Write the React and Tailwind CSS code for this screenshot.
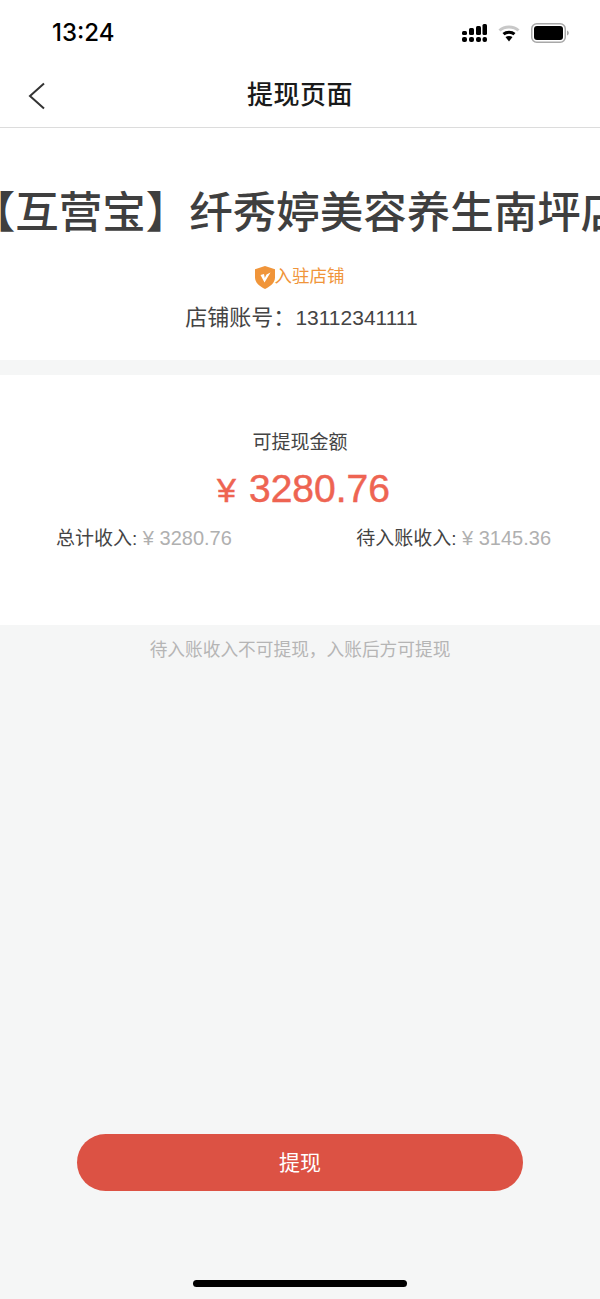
const font = { fontFamily: '"Liberation Sans", "Noto Sans CJK SC", sans-serif' };

function StatusIcons() {
  return (
    <div className="flex items-center gap-[11px]">
      <svg width="25" height="18" viewBox="0 0 25 18" fill="#000">
        <rect x="0" y="7" width="5" height="4" rx="1.5" />
        <rect x="7" y="4" width="5" height="7" rx="1.5" />
        <rect x="14" y="2" width="5" height="9" rx="1.5" />
        <rect x="20.5" y="0" width="4.5" height="11" rx="1.5" />
        <rect x="0" y="13" width="5" height="5" rx="2" />
        <rect x="7" y="13" width="5" height="5" rx="2" />
        <rect x="14" y="13" width="5" height="5" rx="2" />
        <rect x="20.5" y="13" width="4.5" height="5" rx="2" />
      </svg>
      <svg width="22" height="17" viewBox="0 0 22 17" fill="none">
        <path d="M1.5 5.5C6.5 0.8 15.5 0.8 20.5 5.5" stroke="#c8c8c8" strokeWidth="3" />
        <path d="M5.5 9.2C8.5 6.5 13.5 6.5 16.5 9.2" stroke="#000" strokeWidth="3" />
        <path d="M7.5 12L11 16.5L14.5 12C12.5 10.6 9.5 10.6 7.5 12Z" fill="#000" />
      </svg>
      <svg width="38" height="20" viewBox="0 0 38 20" fill="none">
        <rect x="0.75" y="0.75" width="33.5" height="18.5" rx="5" stroke="#a8a8a8" strokeWidth="1.5" />
        <rect x="3" y="3" width="29" height="14" rx="3" fill="#000" />
        <path d="M36 7.5C37.2 8 37.8 9 37.8 10S37.2 12 36 12.5Z" fill="#a8a8a8" />
      </svg>
    </div>
  );
}

function Shield() {
  return (
    <svg width="20" height="23" viewBox="0 0 20 23">
      <path d="M10 0L20 3.2V11.5C20 16.5 15.5 20.5 10 23C4.5 20.5 0 16.5 0 11.5V3.2Z" fill="#f0953a" />
      <path d="M5.5 9L9.5 16.5L15.5 6.5L11.5 8.5L9.8 12L9 8Z" fill="#fff" />
    </svg>
  );
}

export default function App() {
  return (
    <div className="w-[600px] h-[1299px] relative overflow-hidden bg-[#f5f6f6] flex flex-col" style={font}>
      <div className="bg-white h-[360px] flex flex-col shrink-0">
        <div className="h-[64px] pl-[52px] pr-[31px] flex items-center justify-between pt-[2px]">
          <span className="text-[24px] font-medium text-black leading-none" style={{ fontFamily: 'Inter, sans-serif' }}>13:24</span>
          <StatusIcons />
        </div>
        <div className="h-[64px] relative flex items-center justify-center border-b border-[#dcdcdc] pb-[1px]">
          <svg className="absolute left-[28px] top-[18px]" width="18" height="28" viewBox="0 0 18 28" fill="none">
            <path d="M16 1.5L2 14L16 26.5" stroke="#333" strokeWidth="2" />
          </svg>
          <span className="text-[26px] font-medium text-[#1a1a1a] tracking-[0.5px] leading-none">提现页面</span>
        </div>
        <div className="flex justify-center overflow-hidden mt-[55px] pr-[4px]">
          <div className="text-[43.5px] leading-[60px] text-[#3f3f3f] whitespace-nowrap shrink-0 font-medium">【互营宝】纤秀婷美容养生南坪店</div>
        </div>
        <div className="flex items-center justify-center mt-[22px] h-[24px] pr-[1px]">
          <Shield />
          <span className="text-[17.5px] leading-none text-[#f0953a]">入驻店铺</span>
        </div>
        <div className="text-center text-[22px] leading-[30px] text-[#444] mt-[14px] pl-[3px]">店铺账号：<span className="text-[21px]">13112341111</span></div>
      </div>
      <div className="bg-white mt-[15px] h-[250px] flex flex-col items-center shrink-0">
        <div className="text-[19px] leading-[26px] text-[#444] mt-[55px]">可提现金额</div>
        <div className="flex items-baseline gap-[13px] text-[39px] leading-[50px] text-[#ee6452] mt-[8px] pl-[7px] [-webkit-text-stroke:0.5px_#ee6452]">
          <span className="text-[34px]">¥</span>
          <span>3280.76</span>
        </div>
        <div className="w-full flex justify-between pl-[56px] pr-[49px] mt-[9px] text-[19px] leading-[28px]">
          <div><span className="text-[#444]">总计收入:</span><span className="text-[#b0b0b0] text-[20px]"> ¥ 3280.76</span></div>
          <div><span className="text-[#444]">待入账收入:</span><span className="text-[#b0b0b0] text-[20px]"> ¥ 3145.36</span></div>
        </div>
      </div>
      <div className="text-center text-[17.7px] leading-[26px] text-[#b5b5b5] mt-[12px]">待入账收入不可提现，入账后方可提现</div>
      <div className="mt-auto flex flex-col items-center">
        <div className="w-[446px] h-[57px] rounded-full bg-[#dc5244] flex items-center justify-center text-white text-[21px]">提现</div>
        <div className="w-[214px] h-[7px] rounded-full bg-black mt-[89px] mb-[12px]"></div>
      </div>
    </div>
  );
}
